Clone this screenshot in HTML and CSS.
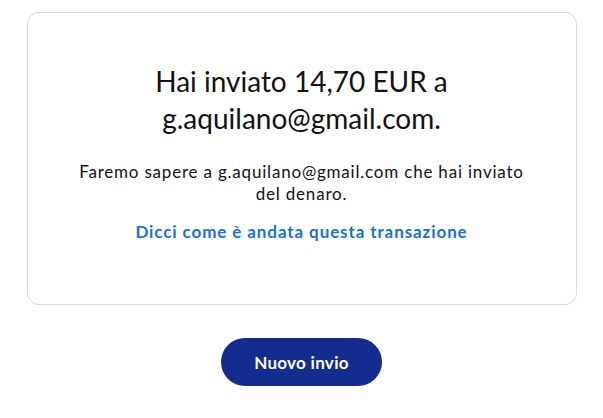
FILE: index.html
```html
<!DOCTYPE html>
<html lang="it">
<head>
    <meta charset="UTF-8">
    <meta name="viewport" content="width=device-width, initial-scale=1.0">
    <title>Invio completato</title>
    <link rel="stylesheet" href="styles.css">
</head>
<body>
    <div class="page">
        <div class="confirm-card">
            <h1 class="confirm-title">Hai inviato 14,70 EUR a g.aquilano@gmail.com.</h1>
            <p class="confirm-text">Faremo sapere a g.aquilano@gmail.com che hai inviato del denaro.</p>
            <a class="feedback-link" href="#">Dicci come è andata questa transazione</a>
        </div>

        <button class="send-again" type="button">Nuovo invio</button>
    </div>
</body>
</html>
```

FILE: styles.css
```css
body {
    margin: 0;
    background: #fff;
    font-family: Lato, "Open Sans", sans-serif;
    color: #121212;
}

.page {
    display: flex;
    flex-direction: column;
    align-items: center;
    padding-top: 12px;
}

/* Card with the summary */
.confirm-card {
    box-sizing: border-box;
    width: 550px;
    min-height: 293px;
    padding: 50px 40px 60px;
    border: 1px solid #dcd9d2;
    border-radius: 12px;
    display: flex;
    flex-direction: column;
    align-items: center;
    text-align: center;
}

.confirm-title {
    margin: 0;
    max-width: 330px;
    font-size: 28px;
    font-weight: 400;
    line-height: 37px;
}

.confirm-text {
    margin: 24px 0 0;
    max-width: 460px;
    font-size: 17px;
    line-height: 22px;
    letter-spacing: 0.8px;
}

.feedback-link {
    margin-top: 16px;
    font-size: 17px;
    line-height: 22px;
    letter-spacing: 0.9px;
    font-weight: 700;
    color: #1b70d8;
    text-decoration: none;
}

/* Main action */
.send-again {
    margin-top: 33px;
    width: 161px;
    height: 48px;
    border: none;
    border-radius: 24px;
    background: #142c8e;
    color: #fff;
    font-family: inherit;
    font-size: 17px;
    font-weight: 700;
    letter-spacing: 0.3px;
    cursor: pointer;
}
```
